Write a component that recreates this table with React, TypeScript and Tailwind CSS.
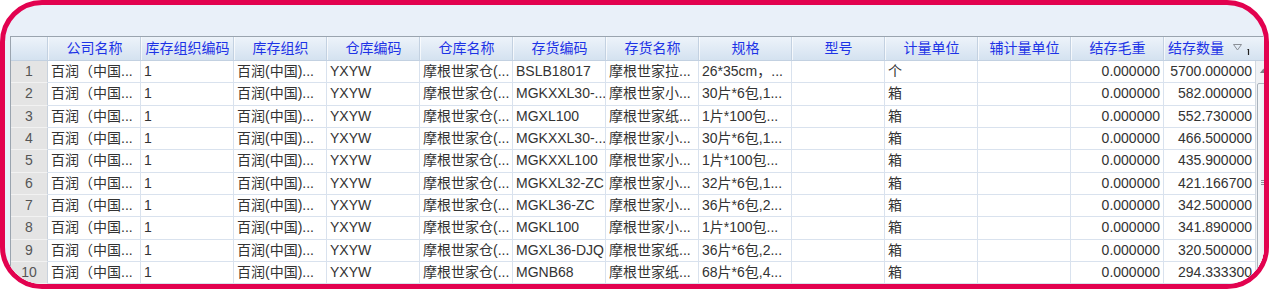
const headers = [
  '公司名称',
  '库存组织编码',
  '库存组织',
  '仓库编码',
  '仓库名称',
  '存货编码',
  '存货名称',
  '规格',
  '型号',
  '计量单位',
  '辅计量单位',
  '结存毛重',
  '结存数量',
];

type Row = [string, string, string, string, string, string, string, string, string, string, string, string, string];

const base = (code: string, name: string, spec: string, unit: string, qty: string): Row => [
  '百润（中国...',
  '1',
  '百润(中国)...',
  'YXYW',
  '摩根世家仓(...',
  code,
  name,
  spec,
  '',
  unit,
  '',
  '0.000000',
  qty,
];

const rows: Row[] = [
  base('BSLB18017', '摩根世家拉...', '26*35cm，...', '个', '5700.000000'),
  base('MGKXXL30-...', '摩根世家小...', '30片*6包,1...', '箱', '582.000000'),
  base('MGXL100', '摩根世家纸...', '1片*100包...', '箱', '552.730000'),
  base('MGKXXL30-...', '摩根世家小...', '30片*6包,1...', '箱', '466.500000'),
  base('MGKXXL100', '摩根世家小...', '1片*100包...', '箱', '435.900000'),
  base('MGKXL32-ZC', '摩根世家小...', '32片*6包,1...', '箱', '421.166700'),
  base('MGKL36-ZC', '摩根世家小...', '36片*6包,2...', '箱', '342.500000'),
  base('MGKL100', '摩根世家小...', '1片*100包...', '箱', '341.890000'),
  base('MGXL36-DJQ', '摩根世家纸...', '36片*6包,2...', '箱', '320.500000'),
  base('MGNB68', '摩根世家纸...', '68片*6包,4...', '箱', '294.333300'),
];

const font = { fontFamily: '"Liberation Sans", "Noto Sans CJK SC", sans-serif' };

const SortIcon = () => (
  <svg width="22" height="14" viewBox="0 0 22 14" className="shrink-0">
    {/* filter triangle */}
    <path d="M1.5 2.5 H9.5 L5.5 8 Z" fill="none" stroke="#8a8f96" strokeWidth="1" />
    {/* tiny sort marker */}
    <path d="M16.5 7 V13" stroke="#222" strokeWidth="1.2" />
    <path d="M15.5 8 L16.5 7" stroke="#222" strokeWidth="1" />
  </svg>
);

export default function App() {
  return (
    <div className="w-[1269px] h-[290px] bg-white" style={font}>
      <div className="h-[289px] w-[1269px] rounded-[42px] border-[5px] border-[#e2024f] bg-[#e9f0f9] overflow-hidden pt-[31px] pl-[5px]">
        <div className="flex flex-col border-l border-t border-[#9aa4af] bg-white">
          {/* header */}
          <div className="flex h-[24px] bg-gradient-to-b from-[#edf3fa] to-[#d4e2f0] border-b border-[#c3d1e1]">
            <div className="w-[37px] shrink-0 border-r border-[#c3d1e1]" />
            {headers.map((h, i) =>
              i === headers.length - 1 ? (
                <div
                  key={h}
                  className="flex-1 flex items-center gap-[8px] pl-[3px] text-[14px] text-[#1d33e6] border-l border-white/70"
                >
                  <span>{h}</span>
                  <SortIcon />
                </div>
              ) : (
                <div
                  key={h}
                  className="w-[93px] shrink-0 flex items-center justify-center text-[14px] text-[#1d33e6] border-r border-[#c3d1e1] border-l border-l-white/70"
                >
                  {h}
                </div>
              ),
            )}
          </div>

          {/* body */}
          <div className="flex">
            <div className="flex flex-col">
              {rows.map((r, ri) => (
                <div key={ri} className="flex h-[22.33px]">
                  <div className="w-[37px] shrink-0 flex items-center justify-center bg-[#e4e4e4] text-[14px] text-[#555] border-r border-[#c9d2dd] border-b border-b-[#f2f2f2]">
                    {ri + 1}
                  </div>
                  {r.map((c, ci) => {
                    const num = ci >= 11;
                    const last = ci === 12;
                    return (
                      <div
                        key={ci}
                        className={`${last ? 'w-[91px]' : 'w-[93px] border-r'} shrink-0 flex items-center overflow-hidden whitespace-nowrap text-[14px] text-[#333] border-b border-[#d9e2ee] ${
                          num ? 'justify-end pr-[3px]' : 'pl-[3px]'
                        } ${last ? 'pr-0' : ''}`}
                      >
                        {c}
                      </div>
                    );
                  })}
                </div>
              ))}
            </div>

            {/* vertical scrollbar */}
            <div className="w-[16px] shrink-0 flex flex-col bg-[#f0f2f5] border-l border-[#d3d9e0]">
              <div className="h-[20px] flex items-start justify-center pt-[7px]">
                <svg width="7" height="5" viewBox="0 0 7 5">
                  <path d="M0 5 L3.5 0.5 L7 5 Z" fill="#7a7f86" />
                </svg>
              </div>
              <div className="mt-[2px] h-[198px] mx-[1px] rounded-[2px] border border-[#aab3bd] bg-gradient-to-r from-[#f6f8fa] to-[#e2e7ec] flex items-center justify-center">
                <div className="flex flex-col gap-[1px]">
                  <div className="w-[6px] h-px bg-[#8c939b]" />
                  <div className="w-[6px] h-px bg-[#8c939b]" />
                  <div className="w-[6px] h-px bg-[#8c939b]" />
                </div>
              </div>
            </div>
          </div>
        </div>
      </div>
    </div>
  );
}
